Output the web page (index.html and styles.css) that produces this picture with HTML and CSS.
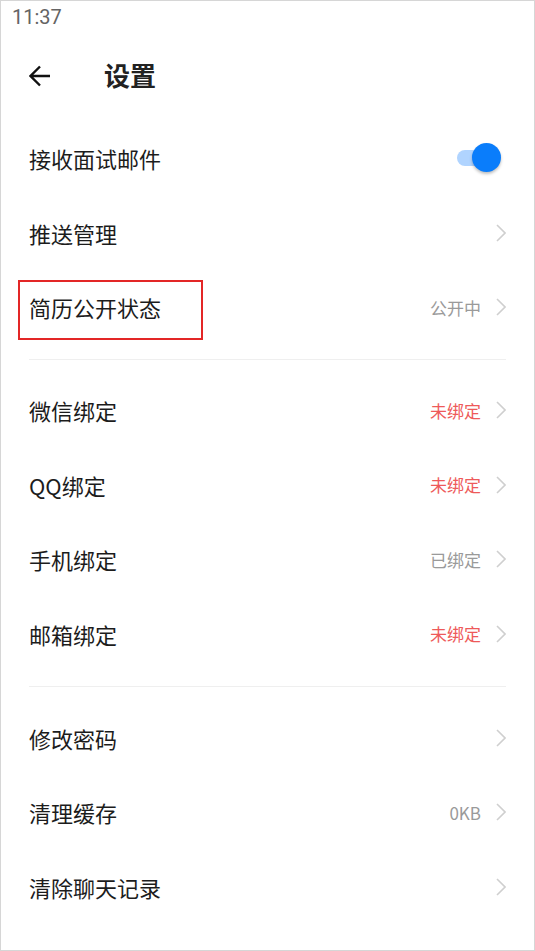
FILE: index.html
```html
<!DOCTYPE html>
<html lang="zh-CN">

<head>
    <meta charset="UTF-8">
    <meta name="viewport" content="width=device-width, initial-scale=1.0">

    <title>设置</title>

    <link rel="stylesheet" href="styles.css">
</head>

<body>
    <div class="screen">
        <div class="status-bar">11:37</div>

        <header class="top-bar">
            <svg class="back" width="22" height="22" viewBox="0 0 22 22">
                <path d="M21 11H2 M11 1.5L1.5 11 11 20.5" fill="none" stroke="#111" stroke-width="2.4" />
            </svg>
            <h1>设置</h1>
        </header>

        <main class="settings">
            <div class="row">
                <span class="label">接收面试邮件</span>
                <div class="switch on"><span class="thumb"></span></div>
            </div>
            <div class="row">
                <span class="label">推送管理</span>
                <svg class="chevron" width="10" height="18" viewBox="0 0 10 18"><path d="M1 1L9 9 1 17" /></svg>
            </div>
            <div class="row">
                <span class="label marked">简历公开状态</span>
                <span class="value">公开中</span>
                <svg class="chevron" width="10" height="18" viewBox="0 0 10 18"><path d="M1 1L9 9 1 17" /></svg>
            </div>

            <hr class="divider">

            <div class="row">
                <span class="label">微信绑定</span>
                <span class="value warn">未绑定</span>
                <svg class="chevron" width="10" height="18" viewBox="0 0 10 18"><path d="M1 1L9 9 1 17" /></svg>
            </div>
            <div class="row">
                <span class="label">QQ绑定</span>
                <span class="value warn">未绑定</span>
                <svg class="chevron" width="10" height="18" viewBox="0 0 10 18"><path d="M1 1L9 9 1 17" /></svg>
            </div>
            <div class="row">
                <span class="label">手机绑定</span>
                <span class="value">已绑定</span>
                <svg class="chevron" width="10" height="18" viewBox="0 0 10 18"><path d="M1 1L9 9 1 17" /></svg>
            </div>
            <div class="row">
                <span class="label">邮箱绑定</span>
                <span class="value warn">未绑定</span>
                <svg class="chevron" width="10" height="18" viewBox="0 0 10 18"><path d="M1 1L9 9 1 17" /></svg>
            </div>

            <hr class="divider second">

            <div class="row">
                <span class="label">修改密码</span>
                <svg class="chevron" width="10" height="18" viewBox="0 0 10 18"><path d="M1 1L9 9 1 17" /></svg>
            </div>
            <div class="row">
                <span class="label">清理缓存</span>
                <span class="value">0KB</span>
                <svg class="chevron" width="10" height="18" viewBox="0 0 10 18"><path d="M1 1L9 9 1 17" /></svg>
            </div>
            <div class="row">
                <span class="label">清除聊天记录</span>
                <svg class="chevron" width="10" height="18" viewBox="0 0 10 18"><path d="M1 1L9 9 1 17" /></svg>
            </div>
        </main>
    </div>
</body>

</html>
```

FILE: styles.css
```css
* {
    margin: 0;
    padding: 0;
    box-sizing: border-box;
}

body {
    width: 535px;
    height: 951px;

    background-color: white;

    font-family: "Noto Sans CJK SC", "Noto Sans", sans-serif;
    color: #1c1c1c;
}

.screen {
    width: 535px;
    height: 951px;

    border: solid 1px #d6d6d6;
    overflow: hidden;
}

.status-bar {
    height: 33px;

    padding-left: 11px;
    padding-top: 4px;

    font-family: Roboto, "Noto Sans", sans-serif;
    font-size: 20px;
    line-height: 24px;
    color: #646464;
}

.top-bar {
    height: 80px;

    display: flex;
    align-items: center;

    padding-left: 28px;
}

.back {
    display: block;

    margin-top: 4px;
}

.top-bar h1 {
    margin-left: 53px;

    font-size: 26px;
    font-weight: 700;
    color: #222;
}

.settings {
    padding: 7px 28px 0 28px;
}

.row {
    height: 74.5px;

    display: flex;
    align-items: center;
}

.label {
    flex: 1;

    font-size: 22px;
    line-height: 30px;
}

.marked {
    position: relative;
}

.marked::after {
    content: "";

    position: absolute;
    left: -11px;
    top: -12px;
    width: 181px;
    height: 56px;

    border: solid 2px #e32626;
}

.value {
    margin-right: 15px;

    font-size: 17px;
    color: #9a9a9a;
}

.value.warn {
    color: #ee5a5a;
}

.chevron {
    display: block;

    fill: none;
    stroke: #cfcfcf;
    stroke-width: 1.6;
}

.switch {
    position: relative;

    width: 44px;
    height: 30px;

    margin-right: 5px;
}

.switch::before {
    content: "";

    position: absolute;
    left: 0;
    top: 7px;
    width: 30px;
    height: 16px;

    border-radius: 8px;
    background-color: #b0d4ff;
}

.switch .thumb {
    position: absolute;
    right: 0;
    top: 0;
    width: 29px;
    height: 29px;

    border-radius: 50%;
    background-color: #0a7dfb;
    box-shadow: 0 2px 3px rgba(0, 0, 0, 0.25);
}

.divider {
    height: 1px;

    margin: 14px 0 13.5px 0;

    border: none;
    background-color: #efefef;
}

.divider.second {
    margin-top: 15px;
}
```
